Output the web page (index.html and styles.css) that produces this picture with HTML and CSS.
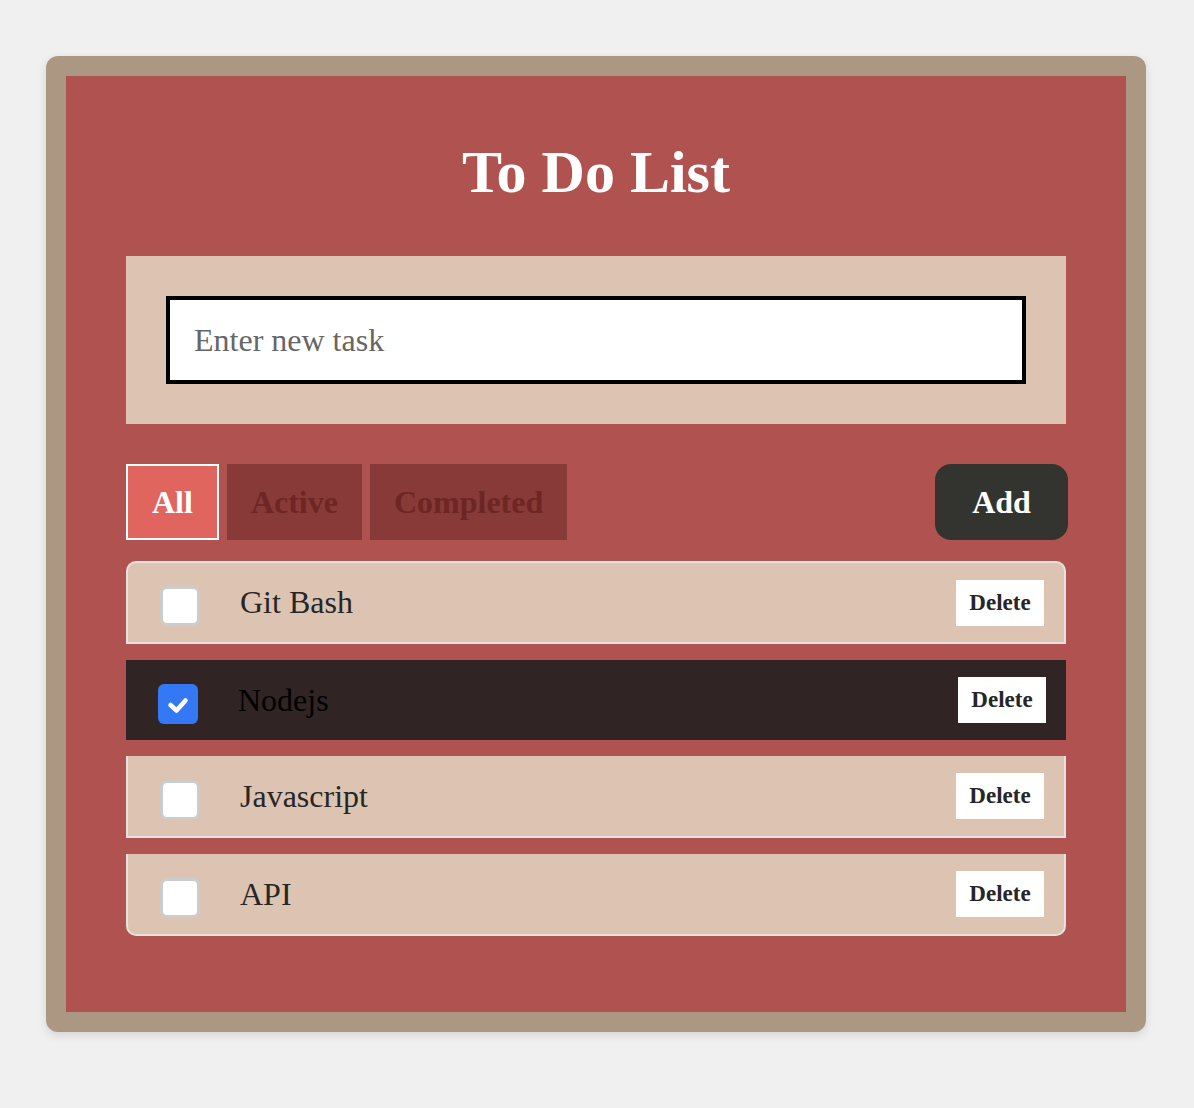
FILE: index.html
```html
<!DOCTYPE html>
<html lang="en">
<head>
<meta charset="utf-8">
<title>To Do List</title>
<link rel="stylesheet" href="styles.css">
</head>
<body>
<div class="card">
  <h1 class="title">To Do List</h1>
  <div class="entry">
    <input class="task-input" type="text" placeholder="Enter new task">
  </div>
  <div class="toolbar">
    <div class="filters">
      <button class="filter filter-on">All</button>
      <button class="filter">Active</button>
      <button class="filter">Completed</button>
    </div>
    <button class="add">Add</button>
  </div>
  <ul class="tasks">
    <li class="task">
      <span class="check"></span>
      <span class="label">Git Bash</span>
      <button class="delete">Delete</button>
    </li>
    <li class="task task-done">
      <span class="check check-on">
        <svg width="40" height="40" viewBox="0 0 40 40"><path d="M12.5 21 L18.5 26.5 L27.5 16.5" fill="none" stroke="#fff" stroke-width="4.5" stroke-linecap="round" stroke-linejoin="round"/></svg>
      </span>
      <span class="label">Nodejs</span>
      <button class="delete">Delete</button>
    </li>
    <li class="task">
      <span class="check"></span>
      <span class="label">Javascript</span>
      <button class="delete">Delete</button>
    </li>
    <li class="task">
      <span class="check"></span>
      <span class="label">API</span>
      <button class="delete">Delete</button>
    </li>
  </ul>
</div>
</body>
</html>
```
FILE: styles.css
```css
* { box-sizing: border-box; }

body {
  margin: 0;
  padding: 56px 48px 60px 46px;
  background: #f0f0f0;
  font-family: "Liberation Serif", "Times New Roman", serif;
}

.card {
  width: 1100px;
  border: 20px solid #ab9782;
  border-radius: 12px;
  background: #b05350;
  padding: 60px 60px 76px;
  box-shadow: 0 3px 10px rgba(0, 0, 0, 0.12);
}

.title {
  margin: 0 0 48px;
  font-size: 60px;
  line-height: 72px;
  font-weight: bold;
  color: #ffffff;
  text-align: center;
}

.entry {
  background: #ddc3b2;
  padding: 40px;
}

.task-input {
  display: block;
  width: 100%;
  height: 88px;
  border: 4px solid #000;
  background: #fff;
  padding: 0 24px;
  font-family: "Liberation Serif", "Times New Roman", serif;
  font-size: 32px;
  color: #222;
  outline: none;
}

.task-input::placeholder {
  color: #666;
}

.toolbar {
  display: flex;
  align-items: center;
  justify-content: space-between;
  margin: 40px -2px 21px 0;
}

.filters {
  display: flex;
  gap: 8px;
}

button {
  font-family: "Liberation Serif", "Times New Roman", serif;
  font-weight: bold;
  cursor: pointer;
}

.filter {
  height: 76px;
  padding: 0 24px;
  border: none;
  background: #873a38;
  color: #6e2624;
  font-size: 32px;
}

.filter-on {
  border: 2px solid #ffffff;
  background: #e0655f;
  color: #ffffff;
}

.add {
  height: 76px;
  width: 133px;
  border: none;
  border-radius: 16px;
  background: #333330;
  color: #ffffff;
  font-size: 32px;
}

.tasks {
  list-style: none;
  margin: 0;
  padding: 0;
  display: flex;
  flex-direction: column;
  gap: 16px;
}

.task {
  display: flex;
  align-items: center;
  height: 82px;
  padding: 0 20px 0 32px;
  background: #ddc3b2;
  border: 2px solid #e4e2e0;
  border-top: none;
}

.task:first-child {
  height: 83px;
  border-top: 2px solid #e4e2e0;
  border-radius: 10px 10px 0 0;
}

.task:last-child {
  border-radius: 0 0 10px 10px;
}

.task-done {
  height: 80px;
  border: none;
  background: #302424;
}

.check {
  flex: none;
  width: 40px;
  height: 40px;
  margin-top: 7px;
  background: #ffffff;
  border: 3px solid #cccccc;
  border-radius: 7px;
}

.check-on {
  border: none;
  background: #3478f6;
  border-radius: 6px;
}

.check-on svg {
  display: block;
}

.label {
  flex: 1;
  margin-left: 40px;
  font-size: 32px;
  color: #262626;
}

.task-done .label {
  color: #000000;
}

.delete {
  width: 88px;
  height: 46px;
  border: none;
  background: #ffffff;
  color: #262626;
  font-size: 23px;
  padding: 0;
}
```
